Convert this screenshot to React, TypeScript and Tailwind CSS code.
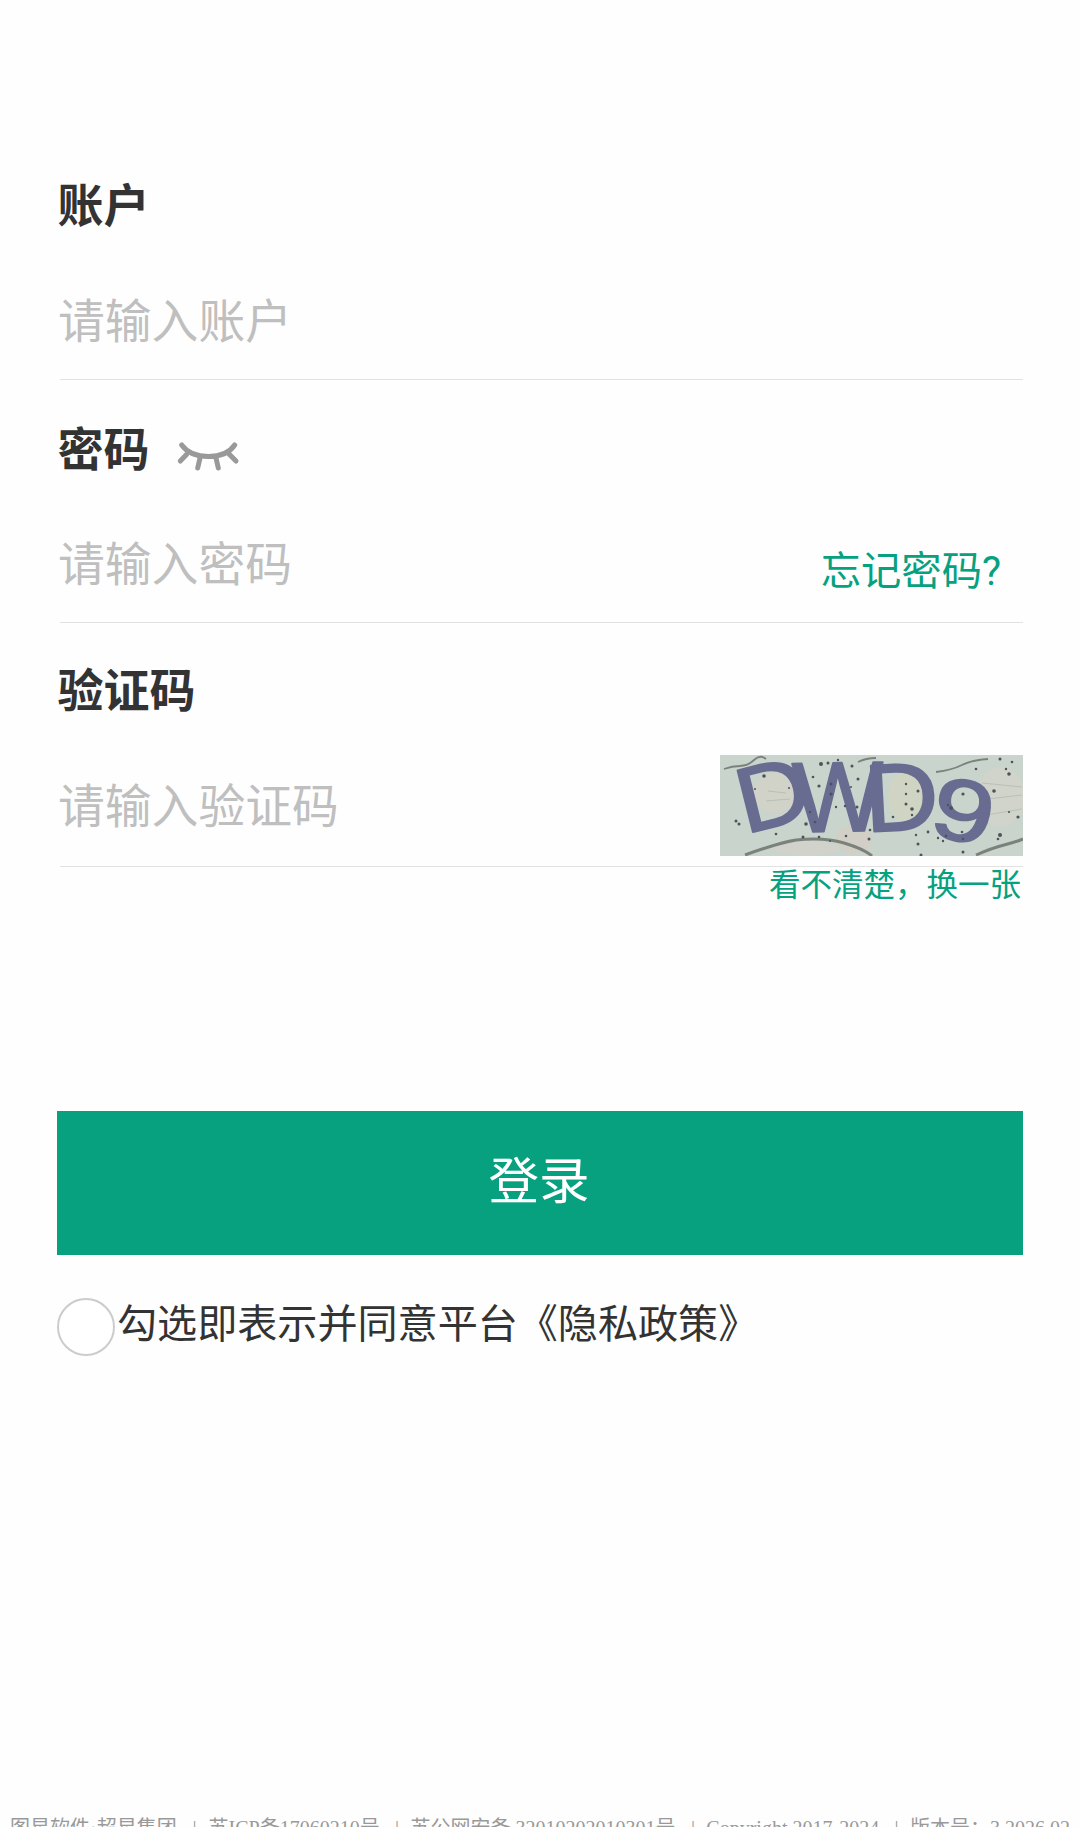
import { useState } from 'react'
import type { ReactNode } from 'react'

// Speckles on the captcha background: x, y, radius
const SPECKLES: [number, number, number][] = [
  [44, 21, 1.8], [101, 9, 2], [108, 8, 1.5], [93, 22, 1.3], [99, 31, 1.6], [111, 29, 1.5], [111, 39, 1.6],
  [16, 66, 1.5], [19, 69, 1.5], [86, 69, 1.8], [35, 34, 1], [69, 33, 1], [56, 79, 1.3], [83, 82, 1.5],
  [90, 57, 1.2], [95, 67, 1.3], [99, 82, 1.3], [116, 52, 1.2], [125, 51, 1.2], [110, 86, 1],
  [118, 5, 1.2], [132, 11, 1.5], [138, 24, 1.5], [131, 32, 1], [137, 52, 1.5], [126, 81, 1.3], [149, 84, 1.5],
  [150, 75, 1.3], [186, 29, 1.2], [186, 39, 1.2], [186, 49, 1.5], [192, 54, 1.8], [192, 60, 1.2], [198, 36, 1.5],
  [173, 62, 1.3], [208, 77, 1.4], [196, 80, 1.2], [198, 89, 1.5], [218, 83, 1.2], [226, 81, 1.3], [223, 86, 1.2],
  [242, 77, 1.3], [243, 84, 1.2], [201, 100, 1.5], [243, 39, 1.6], [231, 53, 2], [228, 50, 1.2], [274, 36, 1.8],
  [280, 80, 2], [278, 84, 1.3], [280, 4, 1.5], [292, 7, 1.3], [289, 19, 1.8], [286, 14, 1.2], [298, 62, 1.6],
  [289, 57, 1.1], [256, 14, 1.3], [243, 97, 1.5],
]

function Captcha() {
  return (
    <svg width="303" height="101" viewBox="0 0 303 101" className="block bg-[#c9d4cc]">
      <ellipse cx="55" cy="38" rx="22" ry="20" fill="#d4d2c6" opacity="0.7" />
      <ellipse cx="188" cy="42" rx="20" ry="26" fill="#d2d6bd" opacity="0.7" />
      <ellipse cx="281" cy="42" rx="24" ry="30" fill="#d3d3c9" opacity="0.8" />
      <ellipse cx="134" cy="84" rx="18" ry="14" fill="#dccabf" opacity="0.5" />
      <ellipse cx="85" cy="93" rx="34" ry="7" fill="#d4d3ca" opacity="0.7" />
      <g fill="none" stroke="#a9b4aa" strokeWidth="1" opacity="0.6">
        <path d="M48 36 L66 38 M46 46 L70 44 M262 28 L302 32 M268 44 L302 40 M266 60 L302 54" />
      </g>
      <g fill="none" stroke="#7b827c" strokeWidth="1.8">
        <path d="M4 14 Q12 11 20 11 T34 5 T46 4" />
        <path d="M138 7 Q146 3 156 3" />
        <path d="M216 17 Q232 15 242 10 T268 4" />
        <path d="M25 100 Q58 88 76 85 Q104 82 124 88 T152 101" strokeWidth="3" />
        <path d="M256 100 Q272 93 284 90 T303 84" strokeWidth="3" />
      </g>
      <g
        fill="#696c91"
        stroke="#696c91"
        strokeWidth="1.8"
        strokeLinejoin="round"
        fontSize="84"
        fontFamily="'Liberation Sans', Arial, sans-serif"
      >
        <text transform="translate(25 79) rotate(-14) scale(1.2 1.1)">D</text>
        <text transform="translate(73 77) rotate(-1) scale(1.15 1.18)">W</text>
        <text transform="translate(146 77) rotate(-3) scale(1.22 1.14)">D</text>
        <text transform="translate(207 79) rotate(12) scale(1.32 1.04)">9</text>
      </g>
      {SPECKLES.map(([x, y, r]) => (
        <circle key={`${x}-${y}`} cx={x} cy={y} r={r} fill="#4d5358" />
      ))}
    </svg>
  )
}

function ClosedEye() {
  return (
    <svg width="64" height="34" viewBox="0 0 64 34" fill="none" stroke="#999" strokeWidth="5" strokeLinecap="round">
      <path d="M5.7 7 Q14 18.5 32.5 18.5 Q51 18.5 58.7 7" />
      <path d="M11 16 L4.3 23 M24 20 L21.7 30 M40 20 L42.3 30 M53 16 L60 23" />
    </svg>
  )
}

type FieldProps = {
  label: string
  placeholder: string
  type?: string
  icon?: ReactNode
  children?: ReactNode
}

function Field({ label, placeholder, type = 'text', icon, children }: FieldProps) {
  return (
    <div className="flex flex-col h-[243.5px]">
      <div className="flex items-center h-[136px] pb-[3px] pl-[0.5px] text-[46px] font-bold text-[#333]">
        {label}
        {icon}
      </div>
      <div className="flex-1 ml-[3px] flex items-center justify-between border-b-[1.5px] border-[#e2e2e2]">
        <input
          type={type}
          placeholder={placeholder}
          className="flex-1 min-w-0 h-[80px] -ml-[2px] mb-[16px] text-[46.8px] font-normal text-[#333] placeholder-[#bfbfbf] outline-none bg-transparent"
        />
        {children}
      </div>
    </div>
  )
}

export default function App() {
  const [agreed, setAgreed] = useState(false)
  const [showPassword, setShowPassword] = useState(false)

  return (
    <div className="flex flex-col w-[1080px] h-[1827px] overflow-hidden bg-[#fefefe] px-[57px] pt-[136px] font-['Noto_Sans_CJK_SC',sans-serif] text-[#333]">
      <Field label="账户" placeholder="请输入账户" />
      <Field
        label="密码"
        placeholder="请输入密码"
        type={showPassword ? 'text' : 'password'}
        icon={
          <button type="button" onClick={() => setShowPassword(v => !v)} className="ml-[26px] mt-[18px]">
            <ClosedEye />
          </button>
        }
      >
        <a className="mt-[7px] mr-[22px] text-[40.3px] leading-none text-[#06a17f] font-['Roboto','Noto_Sans_CJK_SC',sans-serif]">忘记密码?</a>
      </Field>
      <Field label="验证码" placeholder="请输入验证码">
        <div className="mb-[10px] self-end">
          <Captcha />
        </div>
      </Field>

      {/* Refresh captcha */}
      <button type="button" className="self-end h-[36px] -mt-[3px] mr-[2px] text-[31.5px] leading-[36px] text-[#06a17f]">
        看不清楚，换一张
      </button>

      <button type="button" className="mt-[211px] h-[144px] shrink-0 pb-[11px] pr-[2px] bg-[#07a180] text-[50.5px] leading-none text-white">
        登录
      </button>

      {/* Privacy agreement */}
      <div className="flex items-start mt-[43px]">
        <button
          type="button"
          onClick={() => setAgreed(v => !v)}
          className={`size-[58px] shrink-0 rounded-full border-[2.5px] border-[#ccc] ${agreed ? 'bg-[#07a180]' : 'bg-white'}`}
        />
        <span className="ml-[2px] -mt-[3px] text-[40.1px] leading-[52px] whitespace-nowrap">勾选即表示并同意平台《隐私政策》</span>
      </div>

      {/* Footer */}
      <footer className="flex -mx-[47px] mt-auto h-[11px] shrink-0 items-start text-[20px] leading-[24px] whitespace-nowrap text-[#999] font-['Liberation_Serif','Noto_Sans_CJK_SC',serif]">
        <span>图星软件·超星集团</span>
        <span className="w-[32px] pl-[4px] text-center">|</span>
        <span>苏ICP备17060210号</span>
        <span className="w-[31px] pl-[4px] text-center">|</span>
        <span>苏公网安备 32010202010301号</span>
        <span className="w-[31px] pl-[4px] text-center">|</span>
        <span>Copyright 2017-2024</span>
        <span className="w-[31px] pl-[4px] text-center">|</span>
        <span>版本号：3.2026.02</span>
      </footer>
    </div>
  )
}
